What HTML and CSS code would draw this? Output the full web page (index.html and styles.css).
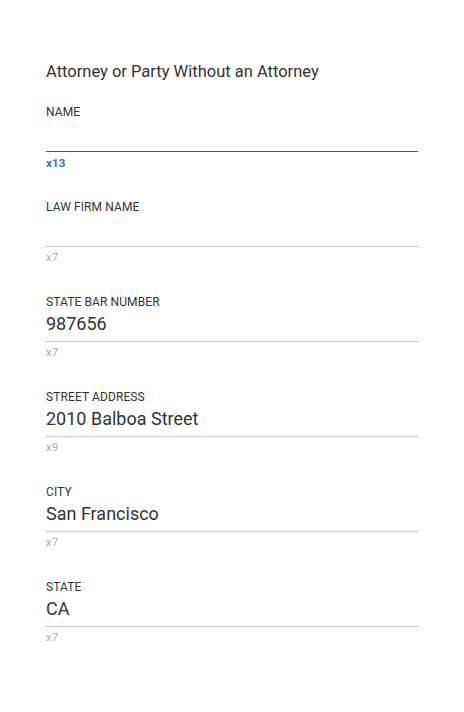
FILE: index.html
```html
<!DOCTYPE html>
<html>
<head>
<meta charset="utf-8">
<link rel="stylesheet" href="styles.css">
</head>
<body>
<div class="form">
  <h1 class="title">Attorney or Party Without an Attorney</h1>
  <div class="fields">
    <div class="field">
      <div class="label">NAME</div>
      <div class="value focused"></div>
      <div class="counter active">x13</div>
    </div>
    <div class="field">
      <div class="label">LAW FIRM NAME</div>
      <div class="value"></div>
      <div class="counter">x7</div>
    </div>
    <div class="field">
      <div class="label">STATE BAR NUMBER</div>
      <div class="value">987656</div>
      <div class="counter">x7</div>
    </div>
    <div class="field">
      <div class="label">STREET ADDRESS</div>
      <div class="value">2010 Balboa Street</div>
      <div class="counter">x9</div>
    </div>
    <div class="field">
      <div class="label">CITY</div>
      <div class="value">San Francisco</div>
      <div class="counter">x7</div>
    </div>
    <div class="field">
      <div class="label">STATE</div>
      <div class="value">CA</div>
      <div class="counter">x7</div>
    </div>
  </div>
</div>
</body>
</html>
```
FILE: styles.css
```css
html, body {
  margin: 0;
  padding: 0;
  background: #ffffff;
}
body {
  font-family: Roboto, "Liberation Sans", sans-serif;
  color: #333333;
}
.form {
  padding: 62px 46px 0 46px;
  width: 372px;
}
.title {
  margin: 0;
  font-size: 16.5px;
  line-height: 20px;
  font-weight: 400;
  color: #333333;
}
.fields {
  margin-top: 23px;
  display: flex;
  flex-direction: column;
  gap: 30px;
}
.field {
  display: flex;
  flex-direction: column;
}
.label {
  font-size: 12px;
  line-height: 14px;
  font-weight: 400;
  letter-spacing: 0.1px;
  color: #333333;
}
.value {
  height: 32px;
  line-height: 30px;
  font-size: 18px;
  color: #333333;
  border-bottom: 1px solid #c8c8c8;
}
.value.focused {
  border-bottom-color: #555555;
}
.counter {
  margin-top: 4px;
  font-size: 11px;
  line-height: 14px;
  letter-spacing: 0.5px;
  color: #ababab;
}
.counter.active {
  color: #3b6fd8;
  font-size: 11.5px;
  font-weight: 700;
  letter-spacing: 0.2px;
}
```
